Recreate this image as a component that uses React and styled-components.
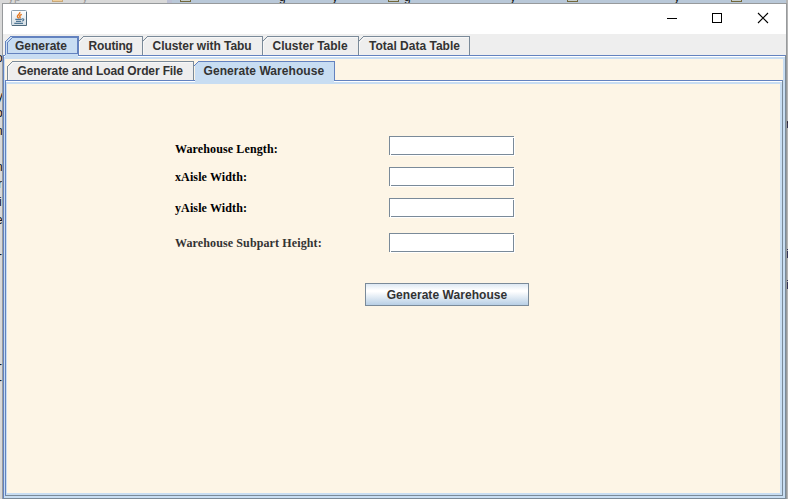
import React from "react";
import styled, { createGlobalStyle } from "styled-components";

const Global = createGlobalStyle`
  * { box-sizing: border-box; }
  html, body { margin: 0; overflow: hidden; }
`;

const BLUE = "#6382bf";
const GREY = "#7a8a99";
const PALE = "#c8ddf2";
const CREAM = "#fdf5e6";

const Desktop = styled.div`
  position: relative;
  width: 788px;
  height: 499px;
  overflow: hidden;
  padding: 3px 1px 0 2px;
  background: linear-gradient(90deg, #d9d9d9 0 167px, #bcc0d4 167px 172px, #b9c8d8 172px 786px, #b5b5b5 786px);
  font-family: "Liberation Sans", Arial, sans-serif;
`;

const Stray = styled.span`
  position: absolute;
  left: ${(p) => p.$x}px;
  top: ${(p) => p.$y}px;
  font-size: 12px;
  line-height: 12px;
  color: ${(p) => p.$c || "#111"};
`;

const FileMark = styled.i`
  position: absolute;
  left: ${(p) => p.$x}px;
  top: -9px;
  width: 11px;
  height: 11px;
  border: 1px solid ${(p) => p.$c || "#72683c"};
  background: ${(p) => p.$fill || "#c5ccca"};
`;

const Window = styled.div`
  position: relative;
  display: flex;
  flex-direction: column;
  width: 785px;
  height: 496px;
  border: 1px solid #979a9c;
  border-bottom: 0;
  background: #eee;
`;

const TitleBar = styled.header`
  display: flex;
  align-items: center;
  flex: 0 0 30px;
  padding: 0 0 2px 8px;
  background: #fff;
`;

const Controls = styled.div`
  display: flex;
  margin-left: auto;
`;

const ControlButton = styled.button`
  display: grid;
  place-items: center;
  width: 46px;
  height: 28px;
  padding: 0;
  border: 0;
  background: none;
`;

const ControlGlyph = styled.svg`
  display: block;
  overflow: visible;
`;

const TabPane = styled.section`
  display: flex;
  flex-direction: column;
  flex: 1;
  min-height: 0;
`;

const TabStrip = styled.nav`
  position: relative;
  z-index: 1;
  display: flex;
  flex: none;
  height: 21px;
  padding: 2px 0 0 2px;
`;

const TabButton = styled.button`
  position: relative;
  flex: none;
  width: ${(p) => p.$w}px;
  height: ${(p) => (p.$active ? 21 : 19)}px;
  padding: 0;
  border: 0;
  background: none;
  font: bold 12px/21px "Liberation Sans", Arial, sans-serif;
  color: #333;
  white-space: nowrap;
  text-align: left;
`;

const TabShape = styled.svg`
  position: absolute;
  left: 0;
  top: 0;
  overflow: visible;
`;

const TabText = styled.span`
  position: absolute;
  left: ${(p) => p.$dx}px;
  top: 0;
  letter-spacing: ${(p) => p.$ls || 0}px;
`;

const PaneBody = styled.div`
  display: flex;
  flex-direction: column;
  flex: 1;
  min-height: 0;
  border: 1px solid ${GREY};
  border-top-color: ${BLUE};
  border-left-color: ${BLUE};
  background: ${PALE};
  padding: 3px 2px 2px 1px;
  box-shadow: inset 0 1px #fff;
`;

const Canvas = styled.div`
  display: flex;
  flex-direction: column;
  flex: 1;
  min-height: 0;
  background: ${CREAM};
`;

const Form = styled.form`
  display: grid;
  grid-template-columns: 214px 126px;
  grid-template-rows: 31px 31px 35px 20px;
  margin: 52px 0 0 168px;
`;

const Label = styled.label`
  font: bold 12px/20px "Liberation Serif", "Times New Roman", serif;
  color: ${(p) => (p.$muted ? "#333" : "#000")};
  padding-top: ${(p) => p.$drop || 0}px;
  letter-spacing: 0.12px;
  white-space: nowrap;
`;

const Field = styled.input`
  width: 126px;
  height: 20px;
  padding: 0 3px;
  border: 0;
  outline: 0;
  border-radius: 0;
  background:
    linear-gradient(${GREY}, ${GREY}) 0 0 / 125px 1px no-repeat,
    linear-gradient(${GREY}, ${GREY}) 0 0 / 1px 19px no-repeat,
    linear-gradient(${GREY}, ${GREY}) 2px 18px / 123px 1px no-repeat,
    linear-gradient(${GREY}, ${GREY}) 124px 2px / 1px 17px no-repeat,
    linear-gradient(${CREAM}, ${CREAM}) 125px 0 / 1px 1px no-repeat,
    linear-gradient(${CREAM}, ${CREAM}) 0 19px / 1px 1px no-repeat,
    #fff;
`;

const ActionButton = styled.button`
  width: 164px;
  height: 23px;
  margin: 30px 0 0 358px;
  padding: 1px 0 0;
  border: 1px solid ${GREY};
  border-radius: 0;
  background: linear-gradient(#dde8f3 0, #fff 30%, #fff 36%, #b8cfe5 100%);
  font: bold 12px/20px "Liberation Sans", Arial, sans-serif;
  letter-spacing: 0.06px;
  color: #333;
`;

function JavaIcon() {
  return (
    <svg width="16" height="16" viewBox="0 0 16 16" fill="none">
      <defs>
        <linearGradient id="tile" x1="0" y1="0" x2="0" y2="1">
          <stop stopColor="#fff" />
          <stop offset="1" stopColor="#d3dde4" />
        </linearGradient>
      </defs>
      <rect x=".5" y=".5" width="15" height="15" rx="1" fill="url(#tile)" stroke="#8b9fae" />
      <path d="M1 15.5h14.5V2" stroke="#4f6a7d" />
      <path
        d="M8.800 2c.9 1.900-2.800 2.800-2.400 4.600.2.800 1 1.200 1.400 1.900M10.800 4.300C8.600 5.200 8.300 6 9 7c.4.600 0 1-.3 1.400"
        stroke="#e5781f"
        strokeWidth="1.400"
      />
      <path
        d="M4.300 9.300h6.500M5 11.300h5.200M3.300 13.400h8.700M11 9c2.500-.8 2.300 1.700.2 2.100"
        stroke="#4f7694"
        strokeWidth="1.200"
      />
    </svg>
  );
}

function Tab({ label, w, dx, ls, active, focused, first }) {
  const h = active ? 21 : 19;
  const start = first ? 0 : active ? 2 : 1;
  return (
    <TabButton $w={w} $active={active}>
      <TabShape width={w + 1} height={h} shapeRendering="crispEdges">
        <path
          d={`M${start} ${h}V${6 - start}L6 0H${w + 1}V19H${w}V${h}H${start}Z`}
          fill={active ? PALE : "#eee"}
        />
        <path
          d={`M${first ? ".5 19V" : ".5 "}5.500L5.500 .5H${w + 0.5}V19`}
          fill="none"
          stroke={active ? BLUE : GREY}
        />
        {!active && (
          <path d={`M1.500 19V6.500L6.500 1.500H${w}`} fill="none" stroke="#fff" strokeOpacity=".5" />
        )}
        {focused && (
          <path d={`M2.500 17.500V6.500L7.500 1.500H${w - 0.5}V17.500Z`} fill="none" stroke={BLUE} />
        )}
      </TabShape>
      <TabText $dx={dx} $ls={ls}>{label}</TabText>
    </TabButton>
  );
}

const fields = [
  { label: "Warehouse Length:", drop: 3 },
  { label: "xAisle Width:" },
  { label: "yAisle Width:" },
  { label: "Warehouse Subpart Height:", muted: true },
];

const topLetters = [[279, "g"], [332, "y"], [404, "g"], [510, "y"], [674, "y"]];
const leftLetters = [
  [52, "o", -4], [90, "y", -3], [107, "p", -4], [125, "n", -4], [161, "n", -4],
  [178, "r", -2], [196, "i", -1], [214, "e", -4], [248, "-", -2], [358, "-", -2], [374, "-", -2],
];
const rightLetters = [[118, "n"], [248, "i"], [279, "i"]];

export default function App() {
  return (
    <>
      <Global />
      <Desktop>
        <Stray $x={8} $y={-9} $c="#999">yp</Stray>
        <Stray $x={82} $y={-9} $c="#999">y</Stray>
        <FileMark $x={52} $c="#c8a878" $fill="#f0cf9c" />
        {[180, 388, 567, 731].map((x) => <FileMark key={x} $x={x} />)}
        {topLetters.map(([x, t]) => <Stray key={x} $x={x} $y={-9}>{t}</Stray>)}
        {leftLetters.map(([y, t, x]) => <Stray key={y} $x={x} $y={y}>{t}</Stray>)}
        {rightLetters.map(([y, t]) => <Stray key={y} $x={786} $y={y}>{t}</Stray>)}
        <Window>
          <TitleBar>
            <JavaIcon />
            <Controls>
              <ControlButton aria-label="Minimize">
                <ControlGlyph width="10" height="10" shapeRendering="crispEdges">
                  <path d="M1 5.500H11" stroke="#000" />
                </ControlGlyph>
              </ControlButton>
              <ControlButton aria-label="Maximize">
                <ControlGlyph width="10" height="10" shapeRendering="crispEdges">
                  <path d="M.5.5h9v9h-9z" fill="none" stroke="#000" />
                </ControlGlyph>
              </ControlButton>
              <ControlButton aria-label="Close">
                <ControlGlyph width="10" height="10">
                  <path d="M0 0L10 10M10 0L0 10" stroke="#000" strokeWidth="1.100" />
                </ControlGlyph>
              </ControlButton>
            </Controls>
          </TitleBar>
          <TabPane>
            <TabStrip>
              <Tab label="Generate" w={73} dx={10} active focused first />
              <Tab label="Routing" w={64} dx={10.5} ls={-0.15} />
              <Tab label="Cluster with Tabu" w={120} dx={10.5} ls={-0.04} />
              <Tab label="Cluster Table" w={96} dx={10.5} />
              <Tab label="Total Data Table" w={111} dx={11} />
            </TabStrip>
            <PaneBody>
              <Canvas>
                <TabStrip>
                  <Tab label="Generate and Load Order File" w={186} dx={10.5} ls={-0.12} first />
                  <Tab label="Generate Warehouse" w={141} dx={10.5} ls={0.06} active />
                </TabStrip>
                <PaneBody>
                  <Canvas>
                    <Form>
                      {fields.map((f) => (
                        <React.Fragment key={f.label}>
                          <Label $drop={f.drop} $muted={f.muted}>{f.label}</Label>
                          <Field aria-label={f.label} />
                        </React.Fragment>
                      ))}
                    </Form>
                    <ActionButton>Generate Warehouse</ActionButton>
                  </Canvas>
                </PaneBody>
              </Canvas>
            </PaneBody>
          </TabPane>
        </Window>
      </Desktop>
    </>
  );
}
